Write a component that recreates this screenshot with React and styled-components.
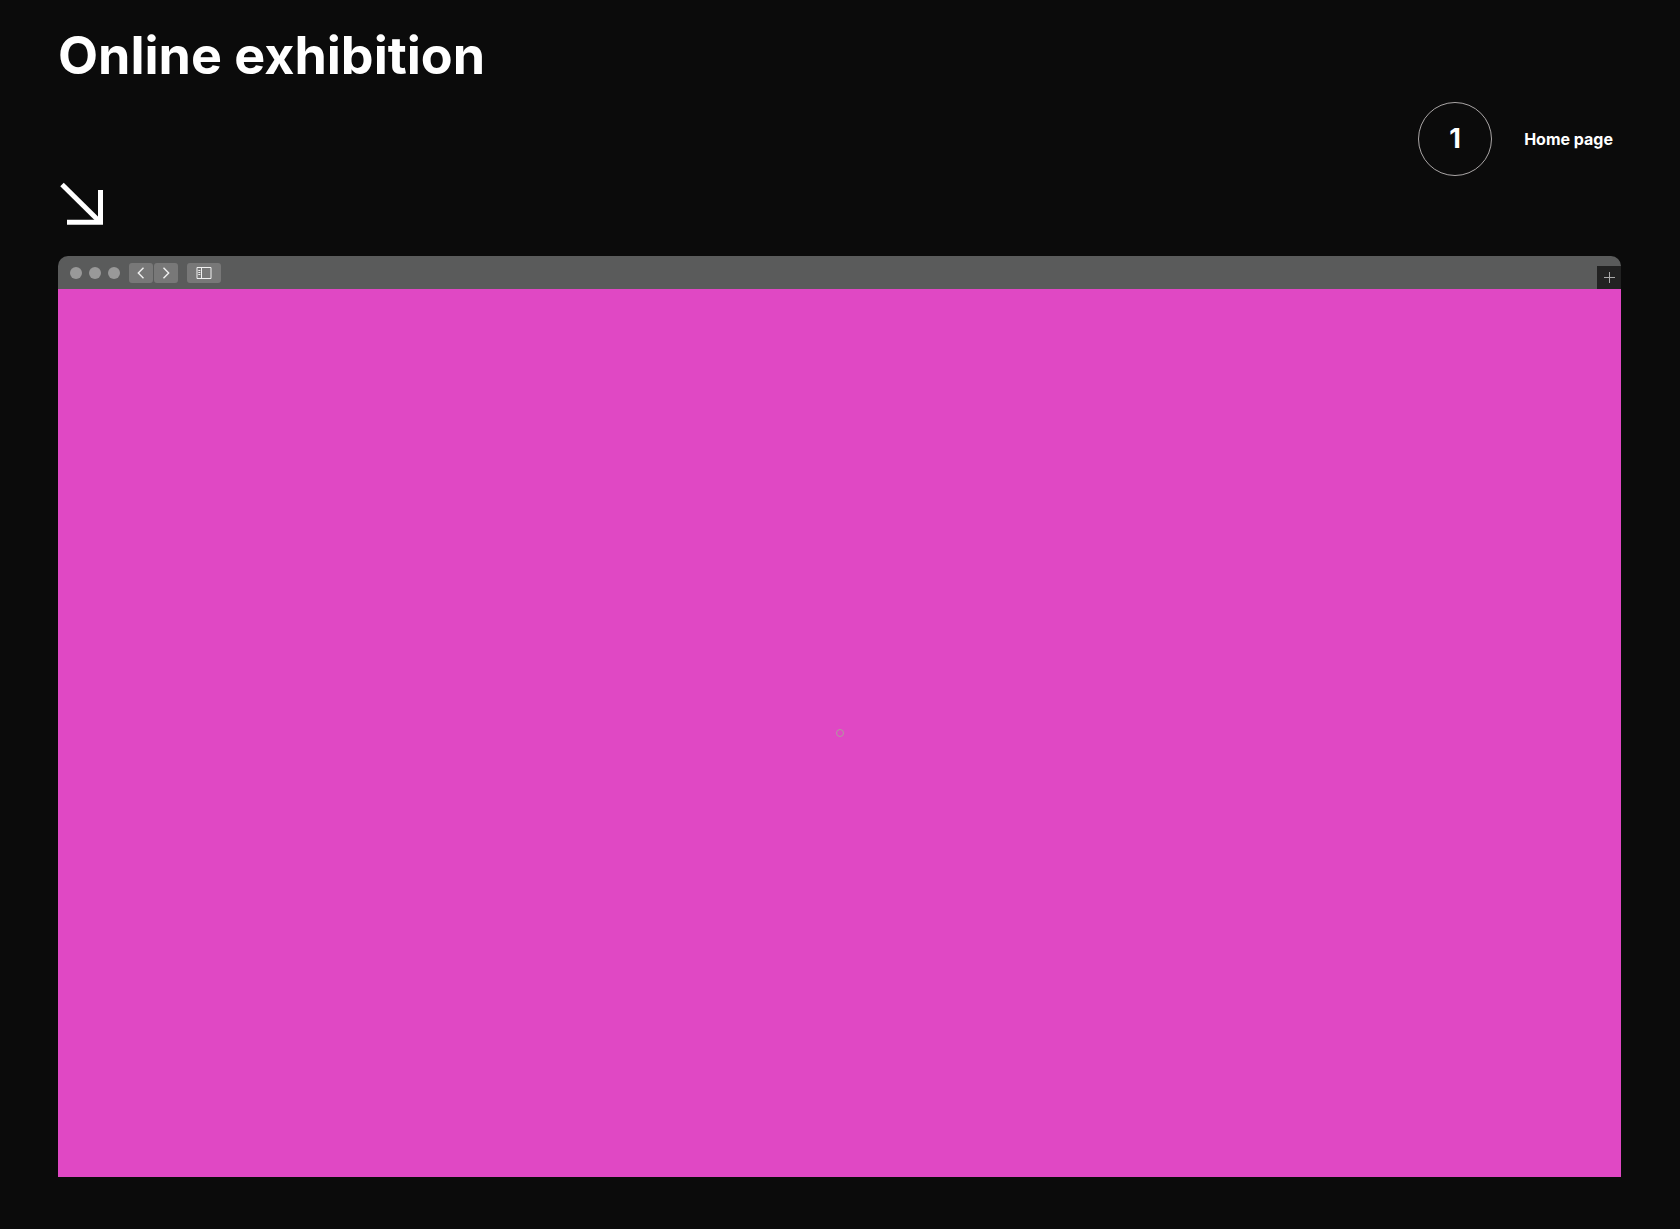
import React from "react";
import styled, { createGlobalStyle } from "styled-components";

const GlobalStyle = createGlobalStyle`
  *, *::before, *::after { box-sizing: border-box; }
  body { margin: 0; background: #0b0b0b; color: #fff; font-family: Inter, "Liberation Sans", sans-serif; }
  button { font: inherit; }
`;

const Page = styled.main`
  display: flex;
  flex-direction: column;
  min-height: 100vh;
  padding: 24px 59px 52px 58px;
`;

const Title = styled.h1`
  margin: 0;
  font-size: 52px;
  line-height: 64px;
  font-weight: 700;
`;

const Intro = styled.div`
  display: flex;
  justify-content: space-between;
  margin-top: 14px;
  height: 154px;
`;

const Arrow = styled.svg`
  align-self: flex-end;
  width: 48px;
  height: 48px;
  margin-bottom: 28px;
`;

const Caption = styled.div`
  display: flex;
  align-items: center;
  align-self: flex-start;
  gap: 32px;
  padding-right: 8px;
  font-size: 16px;
  line-height: 24px;
  font-weight: 700;
`;

const Step = styled.span`
  display: grid;
  place-items: center;
  width: 74px;
  height: 74px;
  border: 1px solid #aaa6a6;
  border-radius: 50%;
  font-size: 27px;
  line-height: 32px;
  font-weight: 700;
`;

const Window = styled.section`
  display: flex;
  flex: 1;
  flex-direction: column;
  overflow: hidden;
  border-radius: 10px 10px 0 0;
`;

const Toolbar = styled.header`
  display: flex;
  align-items: center;
  height: 33px;
  padding-left: 12px;
  gap: 9px;
  background: #5a5b5b;
`;

const Group = styled.div`
  display: flex;
  gap: ${({ $gap }) => $gap}px;
`;

const Dot = styled.span`
  width: 12px;
  height: 12px;
  border-radius: 50%;
  background: #999;
`;

const ToolButton = styled.button`
  display: grid;
  place-items: center;
  width: ${({ $wide }) => ($wide ? 34 : 24)}px;
  height: 20px;
  padding: 0;
  border: 0;
  border-radius: 3px;
  background: #787878;
  color: #f0f0f0;
`;

const NewTab = styled.button`
  display: grid;
  place-items: center;
  align-self: flex-end;
  width: 24px;
  height: 23px;
  margin-left: auto;
  padding: 0;
  border: 0;
  background: #222;
  color: #aaa;
`;

const Canvas = styled.div`
  display: grid;
  flex: 1;
  place-items: center;
  background: #e048c4;
`;

const Pointer = styled.span`
  width: 8px;
  height: 8px;
  border: 1px solid #b09a9e;
  border-radius: 50%;
`;

const Icon = ({ width, height, children }) => (
  <svg width={width} height={height} viewBox={`0 0 ${width} ${height}`} fill="none" stroke="currentColor" aria-hidden="true">
    {children}
  </svg>
);

export default function App() {
  return (
    <>
      <GlobalStyle />
      <Page>
        <Title>Online exhibition</Title>
        <Intro>
          <Arrow viewBox="0 0 48 48" fill="none" stroke="#fff" aria-hidden="true">
            <path d="M4 4.5 42 42" strokeWidth="5" />
            <path d="M42.5 10v32.3H9" strokeWidth="5" />
          </Arrow>
          <Caption>
            <Step>1</Step>
            <span>Home page</span>
          </Caption>
        </Intro>
        <Window>
          <Toolbar>
            <Group $gap={7}>
              <Dot />
              <Dot />
              <Dot />
            </Group>
            <Group $gap={1}>
              <ToolButton type="button" aria-label="Back">
                <Icon width={8} height={12}><path d="M6.5.7 1.3 6l5.2 5.3" strokeWidth="1.4" /></Icon>
              </ToolButton>
              <ToolButton type="button" aria-label="Forward">
                <Icon width={8} height={12}><path d="M1.5.7 6.7 6l-5.2 5.3" strokeWidth="1.4" /></Icon>
              </ToolButton>
            </Group>
            <ToolButton type="button" $wide aria-label="Sidebar">
              <Icon width={16} height={12}>
                <path d="M1 .5h14v11H1zM5.5.5v11M2.3 3.5h2M2.3 5.5h2M2.3 7.5h2" />
              </Icon>
            </ToolButton>
            <NewTab type="button" aria-label="New tab">
              <Icon width={11} height={11}><path d="M5.5 0v11M0 5.5h11" /></Icon>
            </NewTab>
          </Toolbar>
          <Canvas>
            <Pointer />
          </Canvas>
        </Window>
      </Page>
    </>
  );
}
